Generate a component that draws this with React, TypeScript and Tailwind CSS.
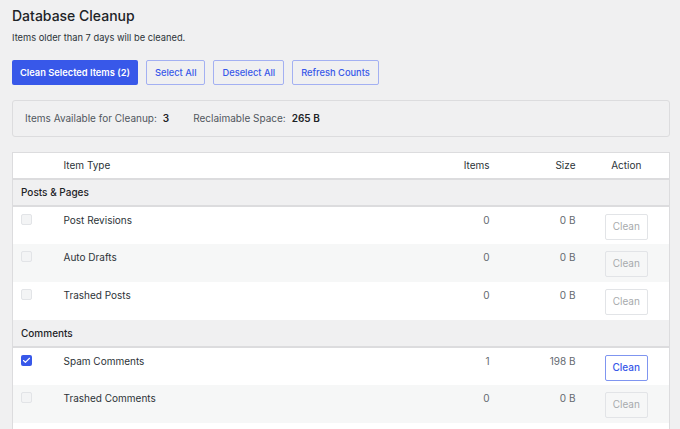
import { Check } from 'lucide-react'

type Row = {
  label: string
  items: number
  size: string
  checked?: boolean
}

const groups: { title: string; rows: Row[] }[] = [
  {
    title: 'Posts & Pages',
    rows: [
      { label: 'Post Revisions', items: 0, size: '0 B' },
      { label: 'Auto Drafts', items: 0, size: '0 B' },
      { label: 'Trashed Posts', items: 0, size: '0 B' },
    ],
  },
  {
    title: 'Comments',
    rows: [
      { label: 'Spam Comments', items: 1, size: '198 B', checked: true },
      { label: 'Trashed Comments', items: 0, size: '0 B' },
      { label: 'Unapproved Comments', items: 0, size: '0 B' },
    ],
  },
]

function Checkbox({ checked, disabled }: { checked?: boolean; disabled?: boolean }) {
  if (checked)
    return (
      <span className="flex h-[11px] w-[11px] items-center justify-center rounded-[2px] bg-[#3858e9]">
        <Check className="h-[9px] w-[9px] text-white" strokeWidth={3} />
      </span>
    )
  return (
    <span
      className={
        disabled
          ? 'block h-[11px] w-[11px] rounded-[2px] border border-[#e2e4e7] bg-[#f3f4f5]'
          : 'block h-[11px] w-[11px] rounded-[2px] border border-[#8c8f94] bg-white'
      }
    />
  )
}

export default function App() {
  let stripe = 0
  return (
    <div className="min-h-screen bg-[#f0f0f1] pl-3 pr-[10px] pt-[5px] font-['Inter',sans-serif] text-[#1d2327]">
      <h1 className="text-[14px] font-medium leading-[22px]">Database Cleanup</h1>
      <p className="mt-[4px] text-[9.3px] leading-[14px] text-[#2c3338]">
        Items older than 7 days will be cleaned.
      </p>

      <div className="mt-[15px] flex gap-2">
        <button
          type="button"
          className="h-[25px] rounded-[2px] bg-[#3858e9] px-[8px] text-[9.3px] font-semibold text-white"
        >
          Clean Selected Items (2)
        </button>
        {['Select All', 'Deselect All', 'Refresh Counts'].map((label) => (
          <button
            key={label}
            type="button"
            className="h-[25px] rounded-[2px] border border-[#a3b0f2] px-[8px] text-[9.3px] font-medium text-[#3858e9]"
          >
            {label}
          </button>
        ))}
      </div>

      <div className="mt-[15px] flex h-[37px] items-center gap-6 rounded-[3px] border border-[#dcdcde] bg-[#f0f0f1] px-3 text-[10px] text-[#50575e]">
        <span>
          Items Available for Cleanup:
          <span className="ml-[6px] font-semibold text-[#1d2327]">3</span>
        </span>
        <span>
          Reclaimable Space:
          <span className="ml-[6px] font-semibold text-[#1d2327]">265 B</span>
        </span>
      </div>

      <table className="mt-[15px] w-full table-fixed border-collapse border border-[#dcdcde] bg-white text-[10px] text-[#2c3338]">
        <colgroup>
          <col className="w-[43px]" />
          <col />
          <col className="w-[80px]" />
          <col className="w-[86px]" />
          <col className="w-[86px]" />
        </colgroup>
        <thead>
          <tr className="h-[26px] border-b-2 border-[#dcdcde]">
            <th />
            <th className="px-2 pt-[1px] text-left font-normal">Item Type</th>
            <th className="px-2 pt-[1px] text-right font-normal">Items</th>
            <th className="px-2 pt-[1px] text-right font-normal">Size</th>
            <th className="px-2 pt-[1px] text-center font-normal">Action</th>
          </tr>
        </thead>
        <tbody>
          {groups.map((g) => {
            stripe = 0
            return [
              <tr key={g.title} className="h-[27px] border-b-2 border-[#dcdcde] bg-[#f0f0f1]">
                <td colSpan={5} className="px-2 pt-[1px] font-medium text-[#1d2327]">
                  {g.title}
                </td>
              </tr>,
              ...g.rows.map((r) => {
                const odd = stripe++ % 2 === 1
                return (
                  <tr key={r.label} className={odd ? 'h-[38px] bg-[#f6f7f7]' : 'h-[38px] bg-white'}>
                    <td className="px-2 pt-[7px] align-top">
                      <Checkbox checked={r.checked} disabled={!r.checked} />
                    </td>
                    <td className="px-2 pt-[6px] align-top leading-[14px]">{r.label}</td>
                    <td className="px-2 pt-[6px] text-right align-top leading-[14px] text-[#646970]">
                      {r.items}
                    </td>
                    <td className="px-2 pt-[6px] text-right align-top leading-[14px] text-[#646970]">
                      {r.size}
                    </td>
                    <td className="pt-[7px] text-center align-top">
                      <button
                        type="button"
                        className={
                          r.checked
                            ? 'h-[26px] w-[43px] rounded-[2px] border border-[#7f95f0] bg-white text-[10px] font-medium text-[#3858e9]'
                            : 'h-[26px] w-[43px] rounded-[2px] border border-[#e2e4e7] bg-transparent text-[10px] text-[#a7aaad]'
                        }
                      >
                        Clean
                      </button>
                    </td>
                  </tr>
                )
              }),
            ]
          })}
        </tbody>
      </table>
    </div>
  )
}
